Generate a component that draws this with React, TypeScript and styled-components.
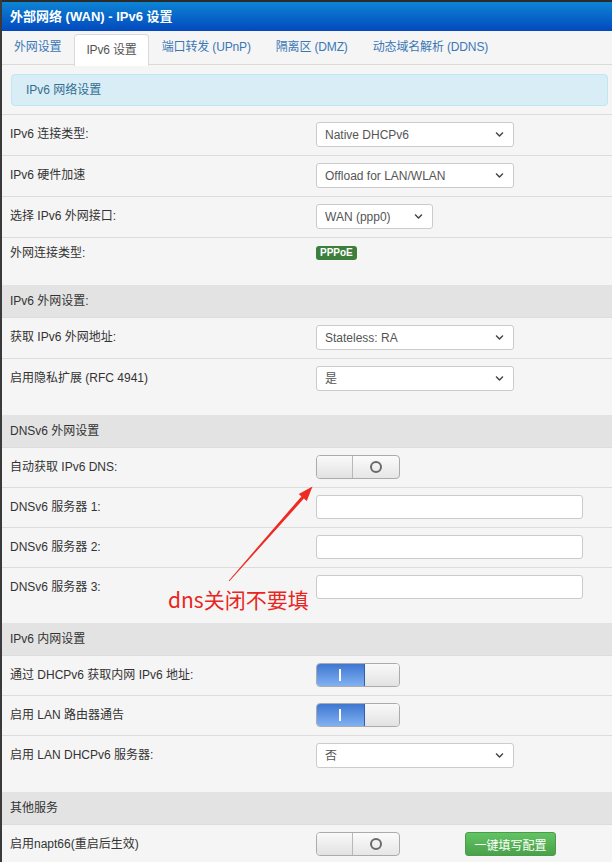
import styled, { createGlobalStyle } from 'styled-components';
import { FaChevronDown } from 'react-icons/fa';

const GlobalStyle = createGlobalStyle`
  html, body {
    margin: 0;
    padding: 0;
    background: #f5f5f5;
  }
  body {
    font-family: "Liberation Sans", "Noto Sans CJK SC", Arial, sans-serif;
    font-size: 12px;
    color: #333;
  }
`;

const Page = styled.div`
  position: relative;
  width: 610px;
  min-height: 862px;
  border-left: 2px solid #3a3a3a;
  background: #f5f5f5;
  overflow: hidden;
`;

const Header = styled.div`
  height: 29px;
  border-top: 2px solid #2b2b2b;
  margin-left: -2px;
  padding-left: 10px;
  background: linear-gradient(#0d84d4, #0349bd);
  color: #fff;
  font-weight: bold;
  font-size: 13px;
  line-height: 29px;
`;

const Tabs = styled.div`
  display: flex;
  height: 33px;
  border-bottom: 1px solid #dadada;
  background: #f5f5f5;
`;

const Tab = styled.div<{ $active?: boolean }>`
  height: ${p => (p.$active ? '31px' : '33px')};
  margin-top: ${p => (p.$active ? '2px' : '0')};
  margin-right: 1px;
  padding: 0 ${p => (p.$active ? '11px' : '12px')};
  line-height: ${p => (p.$active ? '30px' : '33px')};
  color: ${p => (p.$active ? '#555' : '#3a77b5')};
  background: ${p => (p.$active ? '#fff' : 'transparent')};
  border: ${p => (p.$active ? '1px solid #dadada' : 'none')};
  border-bottom: none;
  border-radius: 4px 4px 0 0;
  position: relative;
  top: ${p => (p.$active ? '1px' : '0')};
  white-space: nowrap;
  letter-spacing: -0.15px;
`;

const Alert = styled.div`
  margin: 9px 4px 8px 9px;
  height: 30px;
  padding-left: 14px;
  line-height: 30px;
  color: #31708f;
  background: #d9edf7;
  border: 1px solid #bce8f1;
  border-radius: 4px;
`;

const SectionTitle = styled.div`
  height: 32px;
  padding-left: 8px;
  line-height: 32px;
  background: #e3e3e3;
  color: #333;
`;

const SectionBody = styled.div`
  padding-bottom: 16px;
`;

const Row = styled.div<{ $compact?: boolean }>`
  display: grid;
  grid-template-columns: 314px 1fr;
  align-items: ${p => (p.$compact ? 'start' : 'center')};
  min-height: ${p => (p.$compact ? '0' : '24px')};
  padding: ${p => (p.$compact ? '8px 0' : '7px 0 8px')};
  border-top: 1px solid #dcdcdc;
`;

const Label = styled.div`
  padding-left: 8px;
  line-height: 15px;
`;

const Control = styled.div`
  display: flex;
  align-items: center;
`;

const SelectWrap = styled.div<{ $width: number }>`
  position: relative;
  width: ${p => p.$width}px;
  height: 25px;
`;

const Select = styled.select`
  appearance: none;
  width: 100%;
  height: 100%;
  padding: 0 0 0 8px;
  border: 1px solid #cbcbcb;
  border-radius: 3px;
  background: #fff;
  color: #555;
  font: inherit;
  font-size: 12px;
`;

const Chevron = styled(FaChevronDown)`
  position: absolute;
  right: 10px;
  top: 8px;
  color: #444;
  pointer-events: none;
`;

const TextInput = styled.input.attrs({ type: 'text' })`
  box-sizing: border-box;
  width: 267px;
  height: 24px;
  border: 1px solid #cbcbcb;
  border-radius: 3px;
  background: #fff;
  margin: 0;
`;

const Switch = styled.div`
  display: flex;
  box-sizing: border-box;
  width: 84px;
  height: 24px;
  border: 1px solid #ababab;
  border-radius: 4px;
  overflow: hidden;
  background: linear-gradient(#fbfbfb, #e6e6e6);
`;

const SwitchOn = styled.div`
  display: flex;
  align-items: center;
  justify-content: center;
  width: 48px;
  background: linear-gradient(#3f77d1, #80b1f2);
  border-right: 1px solid #2d5fae;
`;

const SwitchOff = styled.div`
  display: flex;
  align-items: center;
  justify-content: center;
  flex: 1;
`;

const Handle = styled.div<{ $left?: boolean }>`
  width: 35px;
  background: linear-gradient(#f9f9f9, #e2e2e2);
  border-right: ${p => (p.$left ? '1px solid #b8b8b8' : 'none')};
`;

const OnMark = styled.span`
  width: 2px;
  height: 12px;
  background: #fff;
`;

const OffMark = styled.span`
  box-sizing: border-box;
  width: 12px;
  height: 12px;
  border: 2px solid #6a6a6a;
  border-radius: 50%;
`;

const Badge = styled.span`
  display: inline-block;
  padding: 0 4px;
  height: 14px;
  line-height: 14px;
  font-size: 10px;
  font-weight: bold;
  color: #fff;
  background: #3c7f3c;
  border-radius: 3px;
`;

const GreenButton = styled.button.attrs({ type: 'button' })`
  margin-left: 65px;
  width: 91px;
  height: 24px;
  padding: 0;
  color: #fff;
  font: inherit;
  font-size: 12px;
  border: 1px solid #4c9a4c;
  border-radius: 3px;
  background: linear-gradient(#62c462, #4aa14a);
`;

const Note = styled.div`
  position: absolute;
  left: 166px;
  top: 585px;
  color: #e8261f;
  font-size: 21px;
  font-family: "Noto Sans CJK SC", "Liberation Sans", sans-serif;
  line-height: 28px;
  pointer-events: none;
`;

const ArrowLayer = styled.svg`
  position: absolute;
  left: -2px;
  top: 0;
  pointer-events: none;
`;

function Dropdown({ value, width = 198 }: { value: string; width?: number }) {
  return (
    <SelectWrap $width={width}>
      <Select defaultValue={value}>
        <option>{value}</option>
      </Select>
      <Chevron size={9} />
    </SelectWrap>
  );
}

function Toggle({ on }: { on?: boolean }) {
  return on ? (
    <Switch>
      <SwitchOn>
        <OnMark />
      </SwitchOn>
      <Handle />
    </Switch>
  ) : (
    <Switch>
      <Handle $left />
      <SwitchOff>
        <OffMark />
      </SwitchOff>
    </Switch>
  );
}

const tabs = ['外网设置', 'IPv6 设置', '端口转发 (UPnP)', '隔离区 (DMZ)', '动态域名解析 (DDNS)'];

export default function App() {
  return (
    <>
      <GlobalStyle />
      <Page>
        <Header>外部网络 (WAN) - IPv6 设置</Header>
        <Tabs>
          {tabs.map(t => (
            <Tab key={t} $active={t === 'IPv6 设置'}>{t}</Tab>
          ))}
        </Tabs>
        <Alert>IPv6 网络设置</Alert>

        <SectionBody>
          <Row>
            <Label>IPv6 连接类型:</Label>
            <Control><Dropdown value="Native DHCPv6" /></Control>
          </Row>
          <Row>
            <Label>IPv6 硬件加速</Label>
            <Control><Dropdown value="Offload for LAN/WLAN" /></Control>
          </Row>
          <Row>
            <Label>选择 IPv6 外网接口:</Label>
            <Control><Dropdown value="WAN (ppp0)" width={117} /></Control>
          </Row>
          <Row $compact>
            <Label>外网连接类型:</Label>
            <Control><Badge>PPPoE</Badge></Control>
          </Row>
        </SectionBody>

        <SectionTitle>IPv6 外网设置:</SectionTitle>
        <SectionBody>
          <Row>
            <Label>获取 IPv6 外网地址:</Label>
            <Control><Dropdown value="Stateless: RA" /></Control>
          </Row>
          <Row>
            <Label>启用隐私扩展 (RFC 4941)</Label>
            <Control><Dropdown value="是" /></Control>
          </Row>
        </SectionBody>

        <SectionTitle>DNSv6 外网设置</SectionTitle>
        <SectionBody>
          <Row>
            <Label>自动获取 IPv6 DNS:</Label>
            <Control><Toggle /></Control>
          </Row>
          <Row>
            <Label>DNSv6 服务器 1:</Label>
            <Control><TextInput /></Control>
          </Row>
          <Row>
            <Label>DNSv6 服务器 2:</Label>
            <Control><TextInput /></Control>
          </Row>
          <Row>
            <Label>DNSv6 服务器 3:</Label>
            <Control><TextInput /></Control>
          </Row>
        </SectionBody>

        <SectionTitle>IPv6 内网设置</SectionTitle>
        <SectionBody>
          <Row>
            <Label>通过 DHCPv6 获取内网 IPv6 地址:</Label>
            <Control><Toggle on /></Control>
          </Row>
          <Row>
            <Label>启用 LAN 路由器通告</Label>
            <Control><Toggle on /></Control>
          </Row>
          <Row>
            <Label>启用 LAN DHCPv6 服务器:</Label>
            <Control><Dropdown value="否" /></Control>
          </Row>
        </SectionBody>

        <SectionTitle>其他服务</SectionTitle>
        <SectionBody>
          <Row>
            <Label>启用napt66(重启后生效)</Label>
            <Control>
              <Toggle />
              <GreenButton>一键填写配置</GreenButton>
            </Control>
          </Row>
        </SectionBody>

        <ArrowLayer width={612} height={862} viewBox="0 0 612 862">
          <polygon
            points="228.7,580.7 301.4,496.4 298.8,494.0 312.5,486.5 306.8,501.0 303.9,498.6 229.4,581.3"
            fill="#ee2a22"
          />
        </ArrowLayer>
        <Note>dns关闭不要填</Note>
      </Page>
    </>
  );
}
